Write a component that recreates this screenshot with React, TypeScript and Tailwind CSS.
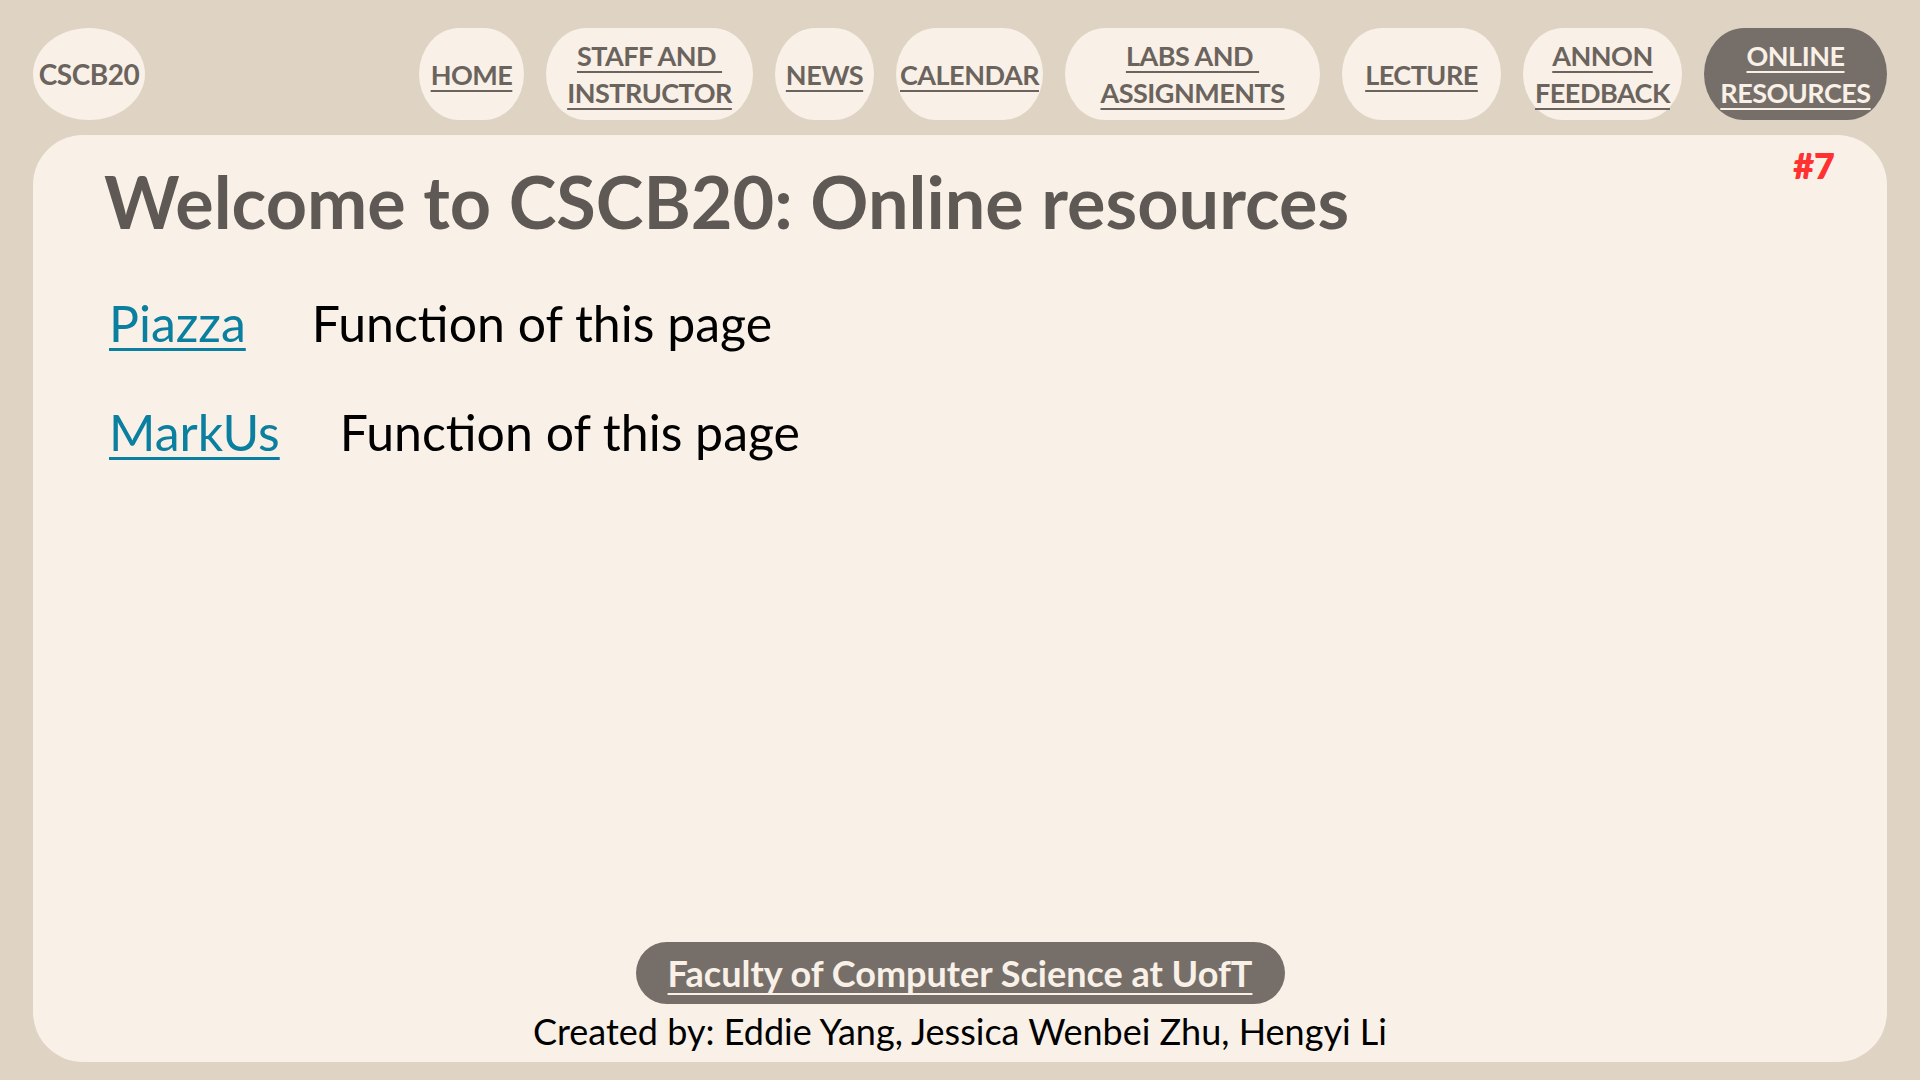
const navItems = [
  { lines: ["HOME"], w: "w-[105px]" },
  { lines: ["STAFF AND ", "INSTRUCTOR"], w: "w-[207px]" },
  { lines: ["NEWS"], w: "w-[99px]" },
  { lines: ["CALENDAR"], w: "w-[147px]" },
  { lines: ["LABS AND ", "ASSIGNMENTS"], w: "w-[255px]" },
  { lines: ["LECTURE"], w: "w-[159px]" },
  { lines: ["ANNON", "FEEDBACK"], w: "w-[159px]" },
  { lines: ["ONLINE", "RESOURCES"], w: "w-[183px]", active: true },
];

const resources = [
  { name: "Piazza", gap: "gap-[66px]" },
  { name: "MarkUs", gap: "gap-[60px]" },
];

export default function App() {
  return (
    <div className="h-screen bg-[#dfd3c3] px-[33px] pt-[28px] pb-[18px] flex flex-col gap-[15px] font-['Lato',sans-serif]">
      {/* NAV */}
      <nav className="flex items-center h-[92px] shrink-0">
        <div className="w-[112px] h-full rounded-[50%] bg-[#f9f1e7] flex items-center justify-center text-[28px] font-bold text-[#6b635d] tracking-[-0.5px]">
          CSCB20
        </div>
        <div className="ml-auto flex h-full gap-[22px]">
          {navItems.map((item) => (
            <a
              key={item.lines.join("")}
              href="#"
              className={
                item.w +
                " h-full rounded-[40px/46px] flex flex-col items-center justify-center text-[27px] leading-[37px] font-bold underline underline-offset-[5px] decoration-2 tracking-[-0.5px] whitespace-pre " +
                (item.active
                  ? "bg-[#766f69] text-[#f9f1e7]"
                  : "bg-[#f9f1e7] text-[#6b635d]")
              }
            >
              {item.lines.map((l) => (
                <span key={l}>{l}</span>
              ))}
            </a>
          ))}
        </div>
      </nav>

      {/* CARD */}
      <main className="relative flex-1 bg-[#f9f1e7] rounded-[50px] flex flex-col pl-[71px] pt-[27px] pb-[10px]">
        <span className="absolute top-[3px] right-[52px] text-[36px] font-extrabold text-[#ff3131]">
          #7
        </span>

        <h1 className="text-[72px] font-bold text-[#5f5955] leading-[79px]">
          Welcome to CSCB20: Online resources
        </h1>

        <div className="mt-[56px] flex flex-col gap-[56px] pl-[5px]">
          {resources.map((r) => (
            <div key={r.name} className={"flex items-center text-[50px] leading-[53px] " + r.gap}>
              <a href="#" className="text-[#0b7fa0] underline underline-offset-[6px] decoration-[3px]">
                {r.name}
              </a>
              <span className="text-black">Function of this page</span>
            </div>
          ))}
        </div>

        {/* FOOTER */}
        <footer className="mt-auto flex flex-col items-center -ml-[71px] gap-[6px]">
          <a
            href="#"
            className="w-[649px] h-[62px] rounded-full bg-[#766f69] text-[#f9f1e7] flex items-center justify-center text-[36px] font-bold underline underline-offset-[6px] decoration-2"
          >
            Faculty of Computer Science at UofT
          </a>
          <p className="text-[36px] leading-[42px] text-black">
            Created by: Eddie Yang, Jessica Wenbei Zhu, Hengyi Li
          </p>
        </footer>
      </main>
    </div>
  );
}
